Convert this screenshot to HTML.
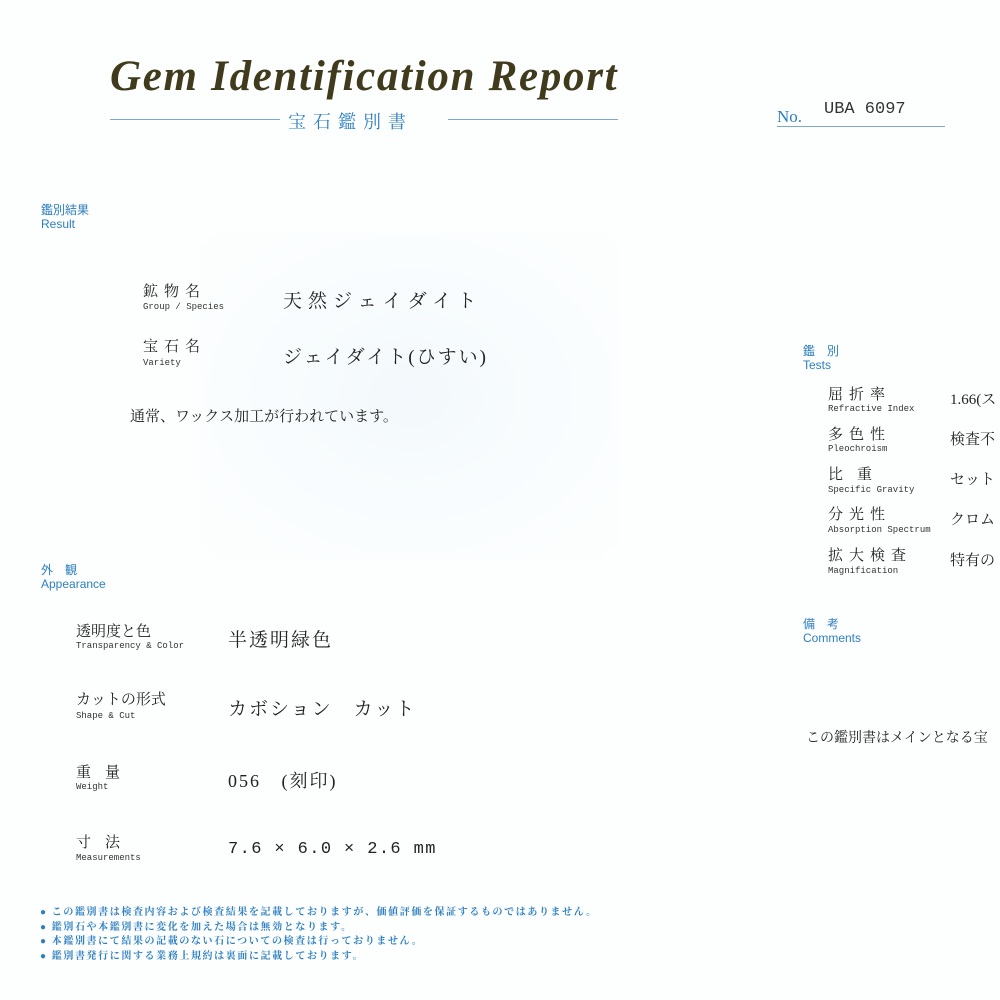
<!DOCTYPE html>
<html><head><meta charset="utf-8"><style>
body{margin:0;width:1000px;height:1000px;background:#fdfefe;position:relative;overflow:hidden;font-family:"Liberation Serif","Noto Serif CJK SC",serif;color:#222}
.a{position:absolute;white-space:nowrap}
.blue{color:#2d7fc0;font-family:"Liberation Sans","Noto Sans CJK JP",sans-serif}
.jp{font-family:"Liberation Serif","Noto Serif CJK SC",serif}
.en{font-family:"Liberation Mono",monospace;font-size:9px;color:#333}
.v{font-size:19px;letter-spacing:2px}
.l{font-size:15px;letter-spacing:6px}
</style></head><body>
<div style="position:absolute;left:200px;top:230px;width:420px;height:330px;background:radial-gradient(ellipse,#f3f9fc 0%,#fafdfe 60%,#fdfefe 100%)"></div>
<div class="a" style="left:110px;top:52px;font-size:43px;font-style:italic;font-weight:bold;color:#3f3b1c;letter-spacing:1.7px">Gem Identification Report</div>
<div class="a" style="left:110px;top:119px;width:170px;border-top:1px solid #7ba8cf"></div>
<div class="a" style="left:448px;top:119px;width:170px;border-top:1px solid #7ba8cf"></div>
<div class="a jp" style="left:288px;top:108px;font-size:18px;color:#2d7fc0;letter-spacing:7px">宝石鑑別書</div>
<div class="a" style="left:777px;top:107px;font-size:17px;color:#2d7fc0">No.</div>
<div class="a" style="left:824px;top:100px;font-size:17px;font-family:'Liberation Mono',monospace;color:#333">UBA 6097</div>
<div class="a" style="left:777px;top:126px;width:168px;border-top:1px solid #7ba8cf"></div>

<div class="a blue" style="left:41px;top:203px;font-size:12px;line-height:14px">鑑別結果<br>Result</div>
<div class="a l" style="left:143px;top:280px">鉱物名</div>
<div class="a en" style="left:143px;top:302px">Group / Species</div>
<div class="a v" style="left:283px;top:286px;letter-spacing:6px">天然ジェイダイト</div>
<div class="a l" style="left:143px;top:335px">宝石名</div>
<div class="a en" style="left:143px;top:358px">Variety</div>
<div class="a v" style="left:283px;top:342px">ジェイダイト(ひすい)</div>
<div class="a" style="left:130px;top:405px;font-size:15px">通常、ワックス加工が行われています。</div>

<div class="a blue" style="left:41px;top:563px;font-size:12px;line-height:14px">外　観<br>Appearance</div>
<div class="a" style="left:76px;top:620px;font-size:15px">透明度と色</div>
<div class="a en" style="left:76px;top:641px">Transparency &amp; Color</div>
<div class="a v" style="left:228px;top:625px">半透明緑色</div>
<div class="a" style="left:76px;top:688px;font-size:15px">カットの形式</div>
<div class="a en" style="left:76px;top:711px">Shape &amp; Cut</div>
<div class="a v" style="left:228px;top:694px">カボション　カット</div>
<div class="a l" style="left:76px;top:761px;letter-spacing:14px">重量</div>
<div class="a en" style="left:76px;top:782px">Weight</div>
<div class="a v" style="left:228px;top:767px;font-size:18px;word-spacing:14px">056 (刻印)</div>
<div class="a l" style="left:76px;top:831px;letter-spacing:14px">寸法</div>
<div class="a en" style="left:76px;top:853px">Measurements</div>
<div class="a" style="left:228px;top:840px;font-size:17px;font-family:'Liberation Mono',monospace;letter-spacing:1.4px">7.6 × 6.0 × 2.6 mm</div>

<div class="a blue" style="left:40px;top:906px;font-size:10px;line-height:14.5px;font-family:'Liberation Serif','Noto Serif CJK SC',serif;font-weight:bold;letter-spacing:1.6px">● この鑑別書は検査内容および検査結果を記載しておりますが、価値評価を保証するものではありません。<br>● 鑑別石や本鑑別書に変化を加えた場合は無効となります。<br>● 本鑑別書にて結果の記載のない石についての検査は行っておりません。<br>● 鑑別書発行に関する業務上規約は裏面に記載しております。</div>

<div class="a blue" style="left:803px;top:344px;font-size:12px;line-height:14px">鑑　別<br>Tests</div>
<div class="a l" style="left:828px;top:383px">屈折率</div><div class="a en" style="left:828px;top:404px">Refractive Index</div><div class="a" style="left:950px;top:388px;font-size:15px">1.66(ス</div>
<div class="a l" style="left:828px;top:423px">多色性</div><div class="a en" style="left:828px;top:444px">Pleochroism</div><div class="a" style="left:950px;top:428px;font-size:15px">検査不</div>
<div class="a l" style="left:828px;top:463px;letter-spacing:14px">比重</div><div class="a en" style="left:828px;top:485px">Specific Gravity</div><div class="a" style="left:950px;top:468px;font-size:15px">セット</div>
<div class="a l" style="left:828px;top:503px">分光性</div><div class="a en" style="left:828px;top:525px">Absorption Spectrum</div><div class="a" style="left:950px;top:508px;font-size:15px">クロム</div>
<div class="a l" style="left:828px;top:544px">拡大検査</div><div class="a en" style="left:828px;top:566px">Magnification</div><div class="a" style="left:950px;top:549px;font-size:15px">特有の</div>
<div class="a blue" style="left:803px;top:617px;font-size:12px;line-height:14px">備　考<br>Comments</div>
<div class="a" style="left:806px;top:727px;font-size:14px">この鑑別書はメインとなる宝</div>
</body></html>
